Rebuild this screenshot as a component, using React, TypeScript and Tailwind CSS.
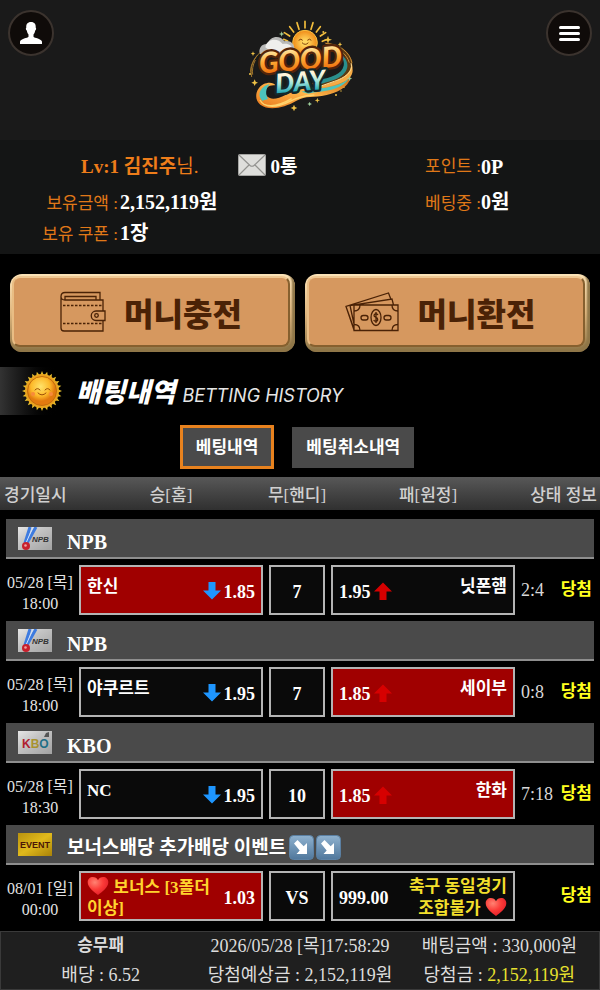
import { Fragment } from 'react'
import clsx from 'clsx'

type Side = {
  name: string
  odds: string
  hit?: boolean
}

type Game = {
  league: string
  logo: 'npb' | 'kbo' | 'event'
  date: string
  time: string
  home: Side
  draw: string
  away: Side
  score?: string
  event?: boolean
}

const games: Game[] = [
  {
    league: 'NPB',
    logo: 'npb',
    date: '05/28 [목]',
    time: '18:00',
    home: { name: '한신', odds: '1.85', hit: true },
    draw: '7',
    away: { name: '닛폰햄', odds: '1.95' },
    score: '2:4',
  },
  {
    league: 'NPB',
    logo: 'npb',
    date: '05/28 [목]',
    time: '18:00',
    home: { name: '야쿠르트', odds: '1.95' },
    draw: '7',
    away: { name: '세이부', odds: '1.85', hit: true },
    score: '0:8',
  },
  {
    league: 'KBO',
    logo: 'kbo',
    date: '05/28 [목]',
    time: '18:30',
    home: { name: 'NC', odds: '1.95' },
    draw: '10',
    away: { name: '한화', odds: '1.85', hit: true },
    score: '7:18',
  },
  {
    league: '보너스배당 추가배당 이벤트',
    logo: 'event',
    date: '08/01 [일]',
    time: '00:00',
    home: { name: '보너스 [3폴더 이상]', odds: '1.03', hit: true },
    draw: 'VS',
    away: { name: '축구 동일경기 조합불가', odds: '999.00' },
    event: true,
  },
]

function Logo() {
  return (
    <svg viewBox="0 0 360 330" className="h-[110px] w-[120px]" role="img" aria-label="GOOD DAY">
      <defs>
        <linearGradient id="gold" x1="0" y1="0" x2="0" y2="1">
          <stop offset="0.15" stopColor="#ffeeb0" />
          <stop offset="0.5" stopColor="#ffab35" />
          <stop offset="0.85" stopColor="#ee6f0e" />
        </linearGradient>
        <linearGradient id="sea" x1="0" y1="0" x2="0" y2="1">
          <stop offset="0.3" stopColor="#fff6dc" />
          <stop offset="0.55" stopColor="#9fe3da" />
          <stop offset="0.85" stopColor="#149fae" />
        </linearGradient>
        <linearGradient id="wave" x1="0" y1="1" x2="1" y2="0">
          <stop offset="0" stopColor="#e9771b" />
          <stop offset="0.5" stopColor="#ffb54a" />
          <stop offset="1" stopColor="#c96a15" />
        </linearGradient>
        <radialGradient id="sunface">
          <stop offset="0.2" stopColor="#ffd75e" />
          <stop offset="1" stopColor="#f08a17" />
        </radialGradient>
      </defs>
      <path
        d="M195 54V34M177 58l-6-20M213 58l6-20M161 66l-12-16M229 66l12-16M149 78l-16-10M241 78l16-10M143 93l-12-5M247 94l12-5"
        stroke="#f2bd3c"
        strokeWidth="5"
        strokeLinecap="round"
      />
      <circle cx="195" cy="98" r="37" fill="url(#sunface)" stroke="#f9c142" strokeWidth="3" />
      <path d="M176 91q7-7 12 0M202 91q7-7 12 0M186 98q10 10 19 0" fill="none" stroke="#7d3f09" strokeWidth="3" />
      <path d="M59 132c-4-20 8-32 24-30 6-24 38-28 50-8 17-4 28 5 30 20l-40 24z" fill="#b9b9b8" />
      <path d="M76 112c3-26 38-31 52-10 16-4 28 4 30 16l-60 10z" fill="#efeeec" />
      <path d="M60 128c-24 20-30 50-28 60M53 135c-18 22-22 40-18 66M46 150c-8 16-10 30-8 44" fill="none" stroke="#9d732b" strokeWidth="3" />
      <path d="M250 97c55 2 92 36 87 76-5 38-62 54-102 70l-20-24c50-8 100-30 102-60 1-26-28-50-67-62z" fill="#5c3a12" />
      <path d="M256 100c45 4 72 26 80 58M262 108c36 6 58 24 66 50" fill="none" stroke="#c98b35" strokeWidth="3" />
      <path d="M286 119c38 23 48 52 22 76-18 16-43 20-67 27l-8-12c44-8 72-18 78-43 4-16-8-34-25-48z" fill="#2a8f8d" />
      <path d="M328 141c17 31-4 58-38 71l-55 20 9 12c46-9 92-30 94-62 0-14-4-30-10-41z" fill="#f5ab45" />
      <path d="M333 160c8 26-20 44-50 54l-40 14" fill="none" stroke="#ffe09a" strokeWidth="3" />
      <path d="M263 230c25-5 52-12 69-29-7 34-43 47-72 54-42 10-60 0-92 18-34 20-81 31-107 11-22-17-12-50 9-61 16-8 31-5 37 3-30-4-37 21-26 33 22 21 62-11 95-20 30-8 56-5 87-9z" fill="url(#wave)" />
      <path d="M327 205c-19 17-43 24-70 28-26 3-50 4-73 12l22 6c38-9 95-5 121-46zM67 272c-20-20 0-46 22-49-13 14-13 30-5 44z" fill="#4cc4bd" />
      <path d="M60 270c13 27 55 22 88 5 26-14 46-19 75-20M72 283c28 12 62-5 83-17" fill="none" stroke="#ffd36d" strokeWidth="4" />
      <g
        transform="rotate(-5 180 160)"
        fontFamily="Lato, 'Open Sans', sans-serif"
        fontWeight="900"
        fontStyle="italic"
        paintOrder="stroke"
        strokeLinejoin="round"
        textAnchor="middle"
      >
        <text x="182" y="180" fontSize="86" fill="url(#gold)" stroke="#54240a" strokeWidth="14">GOOD</text>
        <text x="176" y="243" fontSize="80" fill="url(#sea)" stroke="#14282b" strokeWidth="14">DAY</text>
      </g>
      <g fill="#f0c246">
        <path d="m264 77 3 9 9 3-9 3-3 9-3-9-9-3 9-3zM39 124l2 5 5 2-5 2-2 5-2-5-5-2 5-2zM44 208l3 7 7 3-7 3-3 7-3-7-7-3 7-3zM162 284l3 7 7 3-7 3-3 7-3-7-7-3 7-3zM232 263l2 6 6 2-6 2-2 6-2-6-6-2 6-2zM300 96l2 5 5 2-5 2-2 5-2-5-5-2 5-2z" />
        <circle cx="250" cy="66" r="3" />
        <circle cx="288" cy="255" r="3" />
        <circle cx="312" cy="232" r="2" />
        <circle cx="303" cy="243" r="2" />
        <circle cx="30" cy="192" r="3" />
      </g>
      <path d="m125 64 2 6 6 2-6 2-2 6-2-6-6-2 6-2zM329 198l2 6 6 2-6 2-2 6-2-6-6-2 6-2zM209 275l2 5 5 2-5 2-2 5-2-5-5-2 5-2z" fill="#9fcf9c" />
    </svg>
  )
}

function SunIcon() {
  const rays = Array.from({ length: 24 }, (_, i) => i * 15)
  return (
    <svg viewBox="0 0 44 44" className="h-[44px] w-[44px]" aria-hidden="true">
      <defs>
        <radialGradient id="sun" cx="0.45" cy="0.35">
          <stop offset="0" stopColor="#ffe36b" />
          <stop offset="0.65" stopColor="#fdb92a" />
          <stop offset="1" stopColor="#e27a0f" />
        </radialGradient>
      </defs>
      {rays.map((deg) => (
        <path key={deg} d="M19.500 8 22 2l2.500 6z" fill="#e7c02e" transform={`rotate(${deg} 22 22)`} />
      ))}
      <circle cx="22" cy="22" r="17" fill="#e9a31f" />
      <circle cx="22" cy="22" r="14.500" fill="url(#sun)" stroke="#c46d0c" />
      <path d="M15 21q2.500-3 5 0M25 21q2.500-3 5 0M18 24q4 4 8 0" fill="none" stroke="#9a4d08" strokeLinecap="round" />
      <circle cx="13" cy="25" r="2" fill="#f78a3c" />
      <circle cx="31" cy="25" r="2" fill="#f78a3c" />
    </svg>
  )
}

function WalletIcon() {
  return (
    <svg viewBox="0 0 46 42" className="h-[42px] w-[46px]" fill="none" stroke="#4a2206" strokeWidth="1.3" aria-hidden="true">
      <path d="M40 9V1.500H5Q1 1.500 1 5.500V37q0 3 3 3h39V30M43 20V9H5Q1 9 1 5.500M5 9V5.500h31V9" />
      <path d="M3 14.500h40M3 32.500h40" strokeDasharray="2.500 1.500" />
      <path d="M45 20H36a4.500 4.500 0 0 0 0 9.500h9z" />
      <circle cx="36.500" cy="24.500" r="1.800" />
    </svg>
  )
}

function BillsIcon() {
  return (
    <svg viewBox="0 0 54 40" className="h-[40px] w-[54px]" fill="none" stroke="#4a2206" strokeWidth="1.3" aria-hidden="true">
      <path d="M9 13h44v25.500H9zM9 37 1 14.500 43.500 1 46 7.500M9 32 5 13.500 47 7l1.500 6M1 14.500 9 38" />
      <path d="M9 19q6 0 6-6M47 13q0 6 6 6M9 32.500q6 0 6 6M47 38.500q0-6 6-6" />
      <ellipse cx="31" cy="25.500" rx="5" ry="8" />
      <path d="M33 23q-1-1.500-2.500-1.200-2 .7-1.200 2.400l3 2q1 2-.8 3-2 .3-2.800-1.200M31 20v11" />
      <rect x="16" y="23.500" width="7" height="4.500" rx="2.200" />
      <rect x="39" y="23.500" width="7" height="4.500" rx="2.200" />
    </svg>
  )
}

function Heart() {
  return (
    <svg viewBox="0 0 22 20" className="inline-block h-[20px] w-[22px] align-[-3px]" role="img" aria-label="하트">
      <defs>
        <radialGradient id="heart" cx="0.35" cy="0.3" r="0.8">
          <stop offset="0" stopColor="#ff8272" />
          <stop offset="0.5" stopColor="#fb3b38" />
          <stop offset="1" stopColor="#de1a27" />
        </radialGradient>
      </defs>
      <path d="M11 19C7 16 .7 11.500.7 6.200.7 3 3 1 5.800 1 8.200 1 10 2.200 11 4.200 12 2.200 13.800 1 16.200 1 19 1 21.300 3 21.300 6.200 21.300 11.500 15 16 11 19z" fill="url(#heart)" />
    </svg>
  )
}

function SlideArrow() {
  return (
    <svg viewBox="0 0 25 25" className="h-[25px] w-[25px]" aria-hidden="true">
      <defs>
        <linearGradient id="tile" x1="0" y1="0" x2="0" y2="1">
          <stop offset="0" stopColor="#8fb2cf" />
          <stop offset="1" stopColor="#50779c" />
        </linearGradient>
      </defs>
      <rect x="0.500" y="0.500" width="24" height="24" rx="4" fill="url(#tile)" stroke="#5b80a3" />
      <path d="m5 8.500 3.500-3.500 6.200 6.200 3.300-3.200V19H7.500l3.200-3.600z" fill="#fff" />
    </svg>
  )
}

function Arrow({ up }: { up?: boolean }) {
  return (
    <svg
      viewBox="0 0 18 18"
      className={clsx('mb-[3px] h-[18px] w-[18px] shrink-0', up ? 'text-[#d60000]' : 'text-[#1e96ff]')}
      fill="currentColor"
      aria-hidden="true"
    >
      {up ? <path d="M9 0.500 18 9.500h-5.500V18h-7V9.500H0z" /> : <path d="M9 17.500 0 8.500h5.500V0h7v8.500H18z" />}
    </svg>
  )
}

function LeagueLogo({ kind }: { kind: Game['logo'] }) {
  return (
    <svg viewBox="0 0 34 23" className="h-[23px] w-[34px]" aria-hidden="true">
      <defs>
        <linearGradient id="silver" x1="0" y1="0" x2="1" y2="1">
          <stop offset="0" stopColor="#e6e6e6" />
          <stop offset="0.4" stopColor="#c4c4c4" />
          <stop offset="1" stopColor="#a2a2a2" />
        </linearGradient>
        <linearGradient id="brass" x1="0" y1="0" x2="1" y2="1">
          <stop offset="0" stopColor="#b8920f" />
          <stop offset="0.5" stopColor="#e0b91c" />
          <stop offset="1" stopColor="#a98208" />
        </linearGradient>
      </defs>
      <rect width="34" height="23" fill={kind === 'event' ? 'url(#brass)' : 'url(#silver)'} />
      {kind === 'npb' && (
        <>
          <path d="M12 0 7 16M18 0 9 16" stroke="#3d7be0" strokeWidth="3" />
          <path d="M15 0 8 16" stroke="#cfe2ff" />
          <circle cx="8" cy="19" r="4" fill="#c81f2c" />
          <circle cx="7.500" cy="18.500" r="1.300" fill="#f1a0a0" />
          <text x="14" y="15" fontFamily="'Liberation Sans', sans-serif" fontSize="8" fontWeight="700" fontStyle="italic" fill="#333">NPB</text>
        </>
      )}
      {kind === 'kbo' && (
        <>
          <text x="4" y="17" fontFamily="'Liberation Sans', sans-serif" fontSize="12" fontWeight="700" fill="#b01f30">
            K<tspan fill="#a8922e">B</tspan><tspan fill="#1f6f86">O</tspan>
          </text>
          <path d="m26 6 2-4 3-1v5z" fill="#555" />
        </>
      )}
      {kind === 'event' && (
        <text x="17" y="15" textAnchor="middle" fontFamily="'Liberation Sans Narrow', 'Liberation Sans', sans-serif" fontSize="9" fontWeight="700" fill="#4b1606">
          EVENT
        </text>
      )}
    </svg>
  )
}

function MoneyButton({ label, icon }: { label: string; icon: 'wallet' | 'bills' }) {
  return (
    <button
      type="button"
      className="flex h-[78px] flex-1 rounded-xl bg-linear-to-b from-[#fbe3b8] via-[#e0b77f] to-[#8f7648] p-[2px] shadow-[inset_-3px_-3px_2px_#8f7648]"
    >
      <span
        className={clsx(
          'mr-[3px] mb-[3px] flex flex-1 items-center justify-center self-stretch rounded-lg border-2 border-t-[#efc893] border-r-[#86602f] border-b-[#86602f] border-l-[#e9bd84] bg-[#d6985f]',
          icon === 'wallet' ? 'gap-[18px]' : 'gap-[19px] pr-[12px]',
        )}
      >
        {icon === 'wallet' ? <WalletIcon /> : <BillsIcon />}
        <span className="font-['Noto_Sans_CJK_KR',sans-serif] text-[32px] leading-none font-black text-[#4a2206]">{label}</span>
      </span>
    </button>
  )
}

const box = 'flex h-[50px] items-center border-2 border-[#b4b4b4] font-bold'

function GameRows({ game, first }: { game: Game; first: boolean }) {
  const { home, away, event } = game
  const nameClass = event ? 'pt-[3px] text-[17px] leading-[21px]' : 'pb-[8px] text-[17px] leading-[21px]'
  return (
    <Fragment>
      <tr>
        <td colSpan={5} className={clsx('px-[6px] pb-[3px]', first ? 'pt-[9px]' : 'pt-[3px]')}>
          <div className="flex h-[40px] items-center gap-[15px] border-b-2 border-[#8e8e8e] bg-[#4a4a4a] pl-[12px]">
            <LeagueLogo kind={game.logo} />
            <div className={clsx('flex items-center pt-[7px] leading-none font-bold', event ? 'text-[19px]' : 'text-[20px]')}>
              {game.league}
              {event && (
                <span className="flex gap-[2px] pl-[3px]">
                  <SlideArrow />
                  <SlideArrow />
                </span>
              )}
            </div>
          </div>
        </td>
      </tr>
      <tr>
        <td className="pt-[6px] pl-[4px] text-center text-[16px] leading-[21px] whitespace-nowrap text-[#e4e4e4]">
          {game.date}
          <br />
          {game.time}
        </td>
        <td className="p-[3px]">
          <div className={clsx(box, 'justify-between px-[6px]', home.hit ? 'bg-[#a00000]' : 'bg-[#0a0a0a]')}>
            <span className={clsx(nameClass, event && 'text-[#ffd42e]')}>
              {event && <><Heart />{' '}</>}
              {home.name}
            </span>
            <span className="flex items-center gap-[3px] pt-[4px] text-[18px]">
              {!event && <Arrow />}
              {home.odds}
            </span>
          </div>
        </td>
        <td className="p-[3px]">
          <div className={clsx(box, 'justify-center bg-[#0a0a0a] pt-[4px] text-[18px]')}>{game.draw}</div>
        </td>
        <td className="p-[3px]">
          <div className={clsx(box, 'justify-between px-[6px]', away.hit ? 'bg-[#a00000]' : 'bg-[#0a0a0a]')}>
            <span className="flex items-center gap-[3px] pt-[4px] text-[18px]">
              {away.odds}
              {!event && <Arrow up />}
            </span>
            <span className={clsx(nameClass, 'text-right', event && 'w-[104px] text-[#f2df2c]')}>
              {away.name}
              {event && <>{' '}<Heart /></>}
            </span>
          </div>
        </td>
        <td className="py-[3px] pr-[8px] pl-[3px]">
          <div className="flex items-center justify-between">
            <span className="text-[18px] text-[#d8d8d8]">{game.score}</span>
            <span className="text-[17px] font-bold text-[#ffff1e]">당첨</span>
          </div>
        </td>
      </tr>
    </Fragment>
  )
}

export default function App() {
  return (
    <main className="bg-black font-['Liberation_Serif','Noto_Sans_CJK_KR',serif] text-white">
      <header className="flex h-[140px] items-start justify-between bg-[#1a1a1a] px-[8px] pt-[10px]">
        <button type="button" aria-label="내 정보" className="flex h-[46px] w-[46px] items-center justify-center rounded-full border-2 border-[#3b332e] bg-[#0f0b09]">
          <svg viewBox="0 0 22 22" className="h-[22px] w-[22px]" fill="#fff" aria-hidden="true">
            <path d="M11 0c3.500 0 5 2.300 4.700 5.500.8.700.5 2.500-.5 3-.3 2-1 3.200-1.700 4v2.200c.5 1.300 8.500 2 8.500 5V22H0v-2.300c0-3 8-3.700 8.500-5v-2.200c-.7-.8-1.400-2-1.700-4-1-.5-1.300-2.300-.5-3C6 2.300 7.500 0 11 0z" />
          </svg>
        </button>
        <Logo />
        <button type="button" aria-label="메뉴" className="flex h-[46px] w-[46px] flex-col items-center justify-center gap-[3px] rounded-full border-2 border-[#3b332e] bg-[#0f0b09]">
          <span className="h-[3px] w-[21px] rounded-sm bg-white" />
          <span className="h-[3px] w-[21px] rounded-sm bg-white" />
          <span className="h-[3px] w-[21px] rounded-sm bg-white" />
        </button>
      </header>

      <section className="grid h-[114px] grid-cols-[17fr_7fr] items-start bg-[#141515] pt-[8px] text-[20px] font-bold">
        <div>
          <div className="flex h-[38px] items-center pl-[81px]">
            <span className="text-[19px] text-[#ee7d1a]">
              Lv:1 김진주<span className="font-normal">님.</span>
            </span>
            <svg viewBox="0 0 28 22" className="mr-[4px] mb-[5px] ml-[40px] h-[22px] w-[28px]" aria-hidden="true">
              <rect x="0.500" y="0.500" width="27" height="21" rx="1" fill="#dededb" stroke="#a5a5a2" />
              <path d="m1 21 10-10M27 21 17 11M1 1l11 10.500q2 1.500 4 0L27 1" fill="none" stroke="#92928f" strokeWidth="1.200" />
            </svg>
            <span className="text-[19px]">0통</span>
          </div>
          <div className="flex h-[31px] items-center gap-[2px]">
            <span className="w-[118px] pt-[4px] text-right text-[17px] font-normal text-[#e07818]">보유금액 :</span>
            <span>2,152,119원</span>
          </div>
          <div className="flex h-[31px] items-center gap-[2px]">
            <span className="w-[118px] pt-[4px] text-right text-[17px] font-normal text-[#e07818]">보유 쿠폰 :</span>
            <span>1장</span>
          </div>
        </div>
        <div>
          <div className="flex h-[38px] items-center">
            <span className="text-[17px] font-normal text-[#e07818]">포인트 :</span>
            <span>0P</span>
          </div>
          <div className="flex h-[31px] items-center">
            <span className="pt-[4px] text-[17px] font-normal text-[#e07818]">베팅중 :</span>
            <span>0원</span>
          </div>
        </div>
      </section>

      <div className="flex gap-[10px] px-[10px] pt-[20px]">
        <MoneyButton label="머니충전" icon="wallet" />
        <MoneyButton label="머니환전" icon="bills" />
      </div>

      <div className="mt-[15px] flex h-[48px] w-full items-center bg-linear-to-r from-[#333] to-black to-10% pl-[20px]">
        <SunIcon />
        <h1 className="flex items-baseline gap-[7px] pl-[12px] italic">
          <span className="font-['Noto_Sans_CJK_KR',sans-serif] text-[27px] leading-none font-black">배팅내역</span>
          <span className="font-['Inter',sans-serif] text-[18px] leading-none text-[#e6e6e6]">BETTING HISTORY</span>
        </h1>
      </div>

      <nav className="flex h-[62px] items-center justify-center gap-[18px] pt-[2px] pr-[6px] text-[17px] font-bold">
        <button type="button" className="h-[44px] border-[3px] border-[#e8821e] bg-[#4a4a4a] px-[13px] pt-[2px]">
          베팅내역
        </button>
        <button type="button" className="h-[41px] bg-[#4a4a4a] px-[14px] pt-[2px]">
          베팅취소내역
        </button>
      </nav>

      <table className="w-full table-fixed border-collapse">
        <colgroup>
          <col className="w-[76px]" />
          <col />
          <col className="w-[62px]" />
          <col />
          <col className="w-[82px]" />
        </colgroup>
        <thead>
          <tr className="h-[33px] bg-linear-to-b from-[#585858] to-[#303030] text-[17px] whitespace-nowrap text-[#d0d0d0]">
            <th className="pt-[5px] pl-[4px] text-left font-medium">경기일시</th>
            <th className="pt-[5px] font-medium">승[홈]</th>
            <th className="pt-[5px] font-medium">무[핸디]</th>
            <th className="pt-[5px] pl-[10px] font-medium">패[원정]</th>
            <th className="pt-[5px] pr-[3px] text-right font-medium">상태 정보</th>
          </tr>
        </thead>
        <tbody>
          {games.map((game, i) => (
            <GameRows key={i} game={game} first={i === 0} />
          ))}
        </tbody>
      </table>

      <footer className="mt-[7px] grid grid-cols-3 gap-y-[1px] border border-[#3a3a3a] bg-[#1f1f1f] text-center text-[18px] leading-[28px] whitespace-nowrap text-[#dcdcdc]">
        <span className="text-[17px] font-bold">승무패</span>
        <span>2026/05/28 [목]17:58:29</span>
        <span>배팅금액 : 330,000원</span>
        <span>배당 : 6.52</span>
        <span>당첨예상금 : 2,152,119원</span>
        <span>
          당첨금 : <span className="text-[#e6e02e]">2,152,119원</span>
        </span>
      </footer>
    </main>
  )
}
